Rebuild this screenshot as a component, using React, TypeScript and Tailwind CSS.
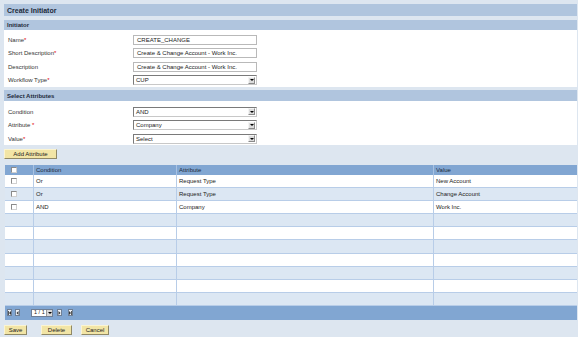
import React from "react";

function Req() {
  return <span className="text-[#e00000]">*</span>;
}

function TextBox({ value }: { value: string }) {
  return (
    <div className="w-[124px] h-[10px] border border-[#b9b9b9] bg-white flex items-center pl-[3px] text-[6px] leading-none text-[#222]">
      {value}
    </div>
  );
}

function Select({ value }: { value: string }) {
  return (
    <div className="w-[124px] h-[10px] border border-[#7a7a7a] border-r-[#c8c8c8] border-b-[#c8c8c8] bg-white flex items-center text-[6px] leading-none text-[#222]">
      <span className="flex-1 pl-[2px]">{value}</span>
      <div className="w-[7px] h-[7px] mr-[1px] bg-[#dcdcdc] border border-[#f4f4f4] border-r-[#8a8a8a] border-b-[#8a8a8a] flex items-center justify-center">
        <svg width="4" height="2" viewBox="0 0 4 2">
          <path d="M0 0H4L2 2Z" fill="#000" />
        </svg>
      </div>
    </div>
  );
}

function Row({ label, children }: { label: React.ReactNode; children: React.ReactNode }) {
  return (
    <div className="flex items-center h-[13.5px]">
      <div className="w-[129px] pl-[4px] text-[6px] leading-none text-[#333]">{label}</div>
      {children}
    </div>
  );
}

function Check() {
  return <div className="w-[6px] h-[6px] border border-[#8a8a8a] border-r-[#d0d0d0] border-b-[#d0d0d0] bg-white" />;
}

function Btn({ label, w }: { label: string; w: string }) {
  return (
    <div
      className={`${w} h-[10px] bg-[#f2e5a6] border border-[#8f8866] border-t-[#fbf4d2] border-l-[#fbf4d2] flex items-center justify-center text-[6px] leading-none text-[#222]`}
    >
      {label}
    </div>
  );
}

function PagerBtn({ dir }: { dir: "first" | "prev" | "next" | "last" }) {
  return (
    <div className="w-[5px] h-[7px] bg-[#eef2f7] border border-[#6f7f95] flex items-center justify-center">
      <svg width="3" height="4" viewBox="0 0 3 4">
        {dir === "first" && (
          <>
            <rect x="0" y="0" width="0.8" height="4" fill="#333" />
            <path d="M3 0V4L1 2Z" fill="#333" />
          </>
        )}
        {dir === "prev" && <path d="M2.5 0V4L0.5 2Z" fill="#333" />}
        {dir === "next" && <path d="M0.5 0V4L2.5 2Z" fill="#333" />}
        {dir === "last" && (
          <>
            <rect x="2.2" y="0" width="0.8" height="4" fill="#333" />
            <path d="M0 0V4L2 2Z" fill="#333" />
          </>
        )}
      </svg>
    </div>
  );
}

const rows: [string, string, string][] = [
  ["Or", "Request Type", "New Account"],
  ["Or", "Request Type", "Change Account"],
  ["AND", "Company", "Work Inc."],
  ["", "", ""],
  ["", "", ""],
  ["", "", ""],
  ["", "", ""],
  ["", "", ""],
  ["", "", ""],
  ["", "", ""],
];

export default function App() {
  return (
    <div className="w-[578px] h-[337px] bg-[#dde6f0] font-['Liberation_Sans',Arial,sans-serif] pt-[4px] pl-[4px] pr-[1px] overflow-hidden flex flex-col">
      <div className="h-[12px] bg-[#b0c5de] flex items-center pl-[3px] text-[7px] font-bold text-[#1d2a3a] leading-none">
        Create Initiator
      </div>
      <div className="h-[4px]" />
      <div className="h-[10px] bg-[#b0c5de] flex items-center pl-[3px] text-[6px] font-bold text-[#1d2a3a] leading-none">
        Initiator
      </div>
      <div className="bg-white pt-[3px] pb-[2px] h-[57px]">
        <Row label={<>Name<Req /></>}>
          <TextBox value="CREATE_CHANGE" />
        </Row>
        <Row label={<>Short Description<Req /></>}>
          <TextBox value="Create & Change Account - Work Inc." />
        </Row>
        <Row label="Description">
          <TextBox value="Create & Change Account - Work Inc." />
        </Row>
        <Row label={<>Workflow Type<Req /></>}>
          <Select value="CUP" />
        </Row>
      </div>
      <div className="h-[3px]" />
      <div className="h-[11px] bg-[#b0c5de] flex items-center pl-[3px] text-[6px] font-bold text-[#1d2a3a] leading-none">
        Select Attributes
      </div>
      <div className="bg-white pt-[4px] h-[44px]">
        <Row label="Condition">
          <Select value="AND" />
        </Row>
        <Row label={<>Attribute <Req /></>}>
          <Select value="Company" />
        </Row>
        <Row label={<>Value<Req /></>}>
          <Select value="Select" />
        </Row>
      </div>
      <div className="h-[4px]" />
      <div>
        <Btn label="Add Attribute" w="w-[53px]" />
      </div>
      <div className="h-[6px]" />
      <div className="flex flex-col pl-[1px]">
        <div className="grid grid-cols-[29px_143px_257px_1fr] h-[10px] bg-[#81a6d2] text-[6px] leading-none text-[#1d2a3a]">
          <div className="flex items-center pl-[6px] border-r border-[#a9c2e2]">
            <Check />
          </div>
          <div className="flex items-center pl-[2px] border-r border-[#a9c2e2]">Condition</div>
          <div className="flex items-center pl-[2px] border-r border-[#a9c2e2]">Attribute</div>
          <div className="flex items-center pl-[2px]">Value</div>
        </div>
        {rows.map((r, i) => (
          <div
            key={i}
            className={`grid grid-cols-[29px_143px_257px_1fr] h-[13.1px] border-b border-[#b8cde8] text-[6px] leading-none text-[#222] ${
              i % 2 === 0 ? "bg-white" : "bg-[#dce7f3]"
            }`}
          >
            <div className="flex items-center pl-[6px] border-r border-[#b8cde8]">{i < 3 ? <Check /> : null}</div>
            <div className="flex items-center pl-[2px] border-r border-[#b8cde8]">{r[0]}</div>
            <div className="flex items-center pl-[2px] border-r border-[#b8cde8]">{r[1]}</div>
            <div className="flex items-center pl-[2px]">{r[2]}</div>
          </div>
        ))}
        <div className="h-[14px] bg-[#81a6d2] flex items-center pl-[2px]">
          <PagerBtn dir="first" />
          <div className="w-[3px]" />
          <PagerBtn dir="prev" />
          <div className="w-[11px]" />
          <div className="w-[22px] h-[8px] bg-white border border-[#6f7f95] flex items-center text-[5.5px] leading-none text-[#222]">
            <span className="flex-1 pl-[2px]">1 / 1</span>
            <div className="w-[6px] h-[6px] bg-[#d8d8d8] flex items-center justify-center border-l border-[#999]">
              <svg width="4" height="2" viewBox="0 0 4 2">
                <path d="M0 0H4L2 2Z" fill="#000" />
              </svg>
            </div>
          </div>
          <div className="w-[4px]" />
          <PagerBtn dir="next" />
          <div className="w-[6px]" />
          <PagerBtn dir="last" />
        </div>
      </div>
      <div className="h-[5px]" />
      <div className="flex">
        <Btn label="Save" w="w-[23px]" />
        <div className="w-[14px]" />
        <Btn label="Delete" w="w-[31px]" />
        <div className="w-[9px]" />
        <Btn label="Cancel" w="w-[28px]" />
      </div>
    </div>
  );
}
